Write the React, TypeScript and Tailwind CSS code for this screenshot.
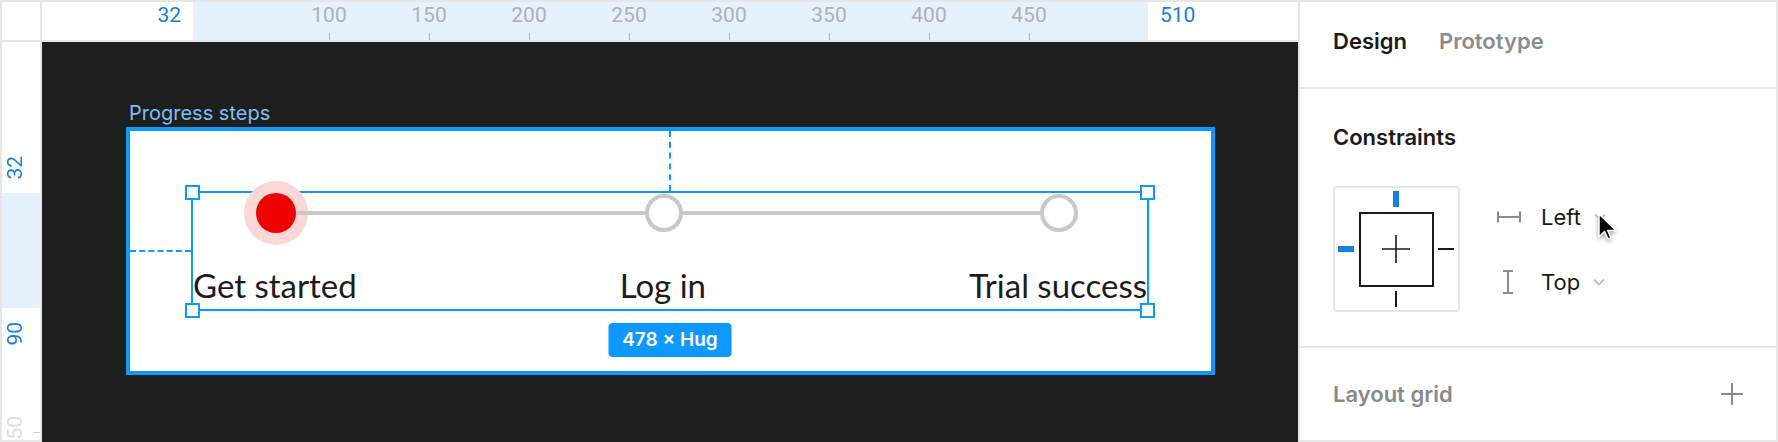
import type { ReactNode } from "react";

const TOP_TICKS = [100, 150, 200, 250, 300, 350, 400, 450];

function TopRuler() {
  return (
    <div className="flex h-[40px] shrink-0 border-b-2 border-[#e6e6e6] font-[Roboto,sans-serif] text-[21px] leading-[26px]">
      <div className="w-[40px] shrink-0 border-r-2 border-[#e6e6e6]" />
      <div className="flex flex-1">
        <div className="flex w-[151px] justify-end pr-[12px] text-[#1a7fe0]">32</div>
        <div className="flex w-[955px] bg-[#e5f2fd] pl-[86px]">
          {TOP_TICKS.map((n) => (
            <div key={n} className="flex w-[100px] flex-col items-center">
              <span className="text-[#b0b0b0]">{n}</span>
              <span className="mt-auto h-[7px] w-px bg-[#b0b0b0]" />
            </div>
          ))}
        </div>
        <div className="pl-[12px] text-[#1a7fe0]">510</div>
      </div>
    </div>
  );
}

function LeftRuler() {
  return (
    <div className="flex w-[40px] shrink-0 flex-col border-r-2 border-[#e6e6e6] font-[Roboto,sans-serif] text-[21px] leading-[24px]">
      <div className="flex h-[151px] flex-col items-start justify-end pb-[13px] pl-[1px]">
        <span className="rotate-180 text-[#1a7fe0] [writing-mode:vertical-rl]">32</span>
      </div>
      <div className="h-[115px] bg-[#e5f2fd]" />
      <div className="flex flex-1 flex-col items-start pl-[1px] pt-[14px]">
        <span className="rotate-180 text-[#1a7fe0] [writing-mode:vertical-rl]">90</span>
        <div className="mt-[70px] flex w-full items-start">
          <span className="rotate-180 text-[#dcdcdc] [writing-mode:vertical-rl]">150</span>
          <span className="ml-auto mt-[16px] h-px w-[7px] bg-[#cfcfcf]" />
        </div>
      </div>
    </div>
  );
}

function Handle({ className }: { readonly className: string }) {
  return <span className={`absolute h-[15px] w-[15px] border-2 border-[#0d99ff] bg-[#f9f9f9] ${className}`} />;
}

function Stepper() {
  return (
    <div className="relative ml-[61px] mt-[60px] h-[120px] w-[958px] border-2 border-[#0d99ff]">
      <div className="flex h-[40px] items-center pl-[51px]">
        <div className="flex h-[64px] w-[64px] shrink-0 items-center justify-center rounded-full bg-[#fbd7d7]">
          <div className="h-[40px] w-[40px] rounded-full bg-[#ee0000]" />
        </div>
        <div className="-ml-[12px] h-[4px] w-[349px] bg-[#c8c8c8]" />
        <div className="h-[38px] w-[38px] shrink-0 rounded-full border-4 border-[#c8c8c8] bg-white" />
        <div className="h-[4px] w-[357px] bg-[#c8c8c8]" />
        <div className="h-[38px] w-[38px] shrink-0 rounded-full border-4 border-[#c8c8c8] bg-white" />
      </div>
      <div className="mt-[32px] flex justify-between font-[Lato,sans-serif] text-[33px] leading-[40px] text-[#1c1c1c]">
        <span>Get started</span>
        <span>Log in</span>
        <span>Trial success</span>
      </div>

      <Handle className="-left-[8px] -top-[8px]" />
      <Handle className="left-[947px] -top-[8px]" />
      <Handle className="-left-[8px] top-[110px]" />
      <Handle className="left-[947px] top-[110px]" />

      <div className="absolute left-1/2 top-[130px] flex h-[34px] w-[123px] -translate-x-1/2 items-center justify-center rounded-[4px] bg-[#0d99ff] font-[Inter,sans-serif] text-[19px] font-semibold text-white">
        478 × Hug
      </div>
    </div>
  );
}

function Canvas() {
  return (
    <div className="flex-1 overflow-hidden bg-[#1e1e1e] pl-[84px] pt-[59px]">
      <div className="mb-[2px] ml-[3px] font-[Inter,sans-serif] text-[20px] leading-[24px] text-[#7dc0f4]">
        Progress steps
      </div>
      <div className="relative h-[248px] w-[1089px] border-4 border-[#0d99ff] bg-white">
        <span className="absolute left-[539px] top-0 h-[60px] border-l-2 border-dashed border-[#0d99ff]" />
        <span className="absolute left-0 top-[119px] w-[61px] border-t-2 border-dashed border-[#0d99ff]" />
        <Stepper />
      </div>
    </div>
  );
}

function Chevron() {
  return (
    <svg width="12" height="8" viewBox="0 0 12 8" className="ml-[13px]">
      <path d="M1 1.5 L6 6.5 L11 1.5" fill="none" stroke="#b3b3b3" strokeWidth="1.5" />
    </svg>
  );
}

function ConstraintRow({ icon, label }: { readonly icon: ReactNode; readonly label: string }) {
  return (
    <div className="flex h-[40px] items-center">
      <div className="flex w-[44px] items-center">{icon}</div>
      <span className="text-[22px] leading-[28px] text-[#1a1a1a]">{label}</span>
      <Chevron />
    </div>
  );
}

function ConstraintWidget() {
  return (
    <div className="h-[126px] w-[127px] shrink-0 rounded-[4px] border-2 border-[#e6e6e6]">
      <svg width="123" height="122" viewBox="0 0 123 122">
        <rect x="25" y="25" width="73" height="73" fill="none" stroke="#1a1a1a" strokeWidth="2" />
        <path d="M47 61 H75 M61 47 V75" stroke="#1a1a1a" strokeWidth="1.6" />
        <rect x="58" y="3" width="6" height="16" fill="#1480e3" />
        <rect x="3" y="58" width="16" height="6" fill="#1480e3" />
        <path d="M103 61 H119" stroke="#1a1a1a" strokeWidth="2" />
        <path d="M61 103 V119" stroke="#1a1a1a" strokeWidth="2" />
      </svg>
    </div>
  );
}

function Panel() {
  return (
    <div className="flex flex-1 flex-col border-l-2 border-[#e6e6e6] font-[Inter,sans-serif]">
      <div className="flex h-[87px] shrink-0 gap-[32px] border-b-2 border-[#e6e6e6] pl-[33px] pt-[25px] text-[22px] font-semibold leading-[28px]">
        <span className="text-[#1a1a1a]">Design</span>
        <span className="text-[#8c8c8c]">Prototype</span>
      </div>
      <div className="h-[259px] shrink-0 border-b-2 border-[#e6e6e6] pl-[33px] pt-[34px]">
        <div className="text-[22px] font-semibold leading-[28px] text-[#1a1a1a]">Constraints</div>
        <div className="mt-[35px] flex">
          <ConstraintWidget />
          <div className="ml-[37px] flex flex-col gap-[25px] pt-[11px]">
            <ConstraintRow
              label="Left"
              icon={
                <svg width="24" height="14" viewBox="0 0 24 14">
                  <path d="M1 7 H23 M1 1.5 V12.5 M23 1.5 V12.5" fill="none" stroke="#8c8c8c" strokeWidth="2" />
                </svg>
              }
            />
            <ConstraintRow
              label="Top"
              icon={
                <svg width="24" height="24" viewBox="0 0 24 24">
                  <path d="M11 1 V23 M6 1 H16 M6 23 H16" fill="none" stroke="#8c8c8c" strokeWidth="2" />
                </svg>
              }
            />
          </div>
        </div>
      </div>
      <div className="flex flex-1 items-center justify-between px-[33px]">
        <span className="text-[22px] font-semibold leading-[28px] text-[#8a8a8a]">Layout grid</span>
        <svg width="22" height="22" viewBox="0 0 22 22">
          <path d="M11 0 V22 M0 11 H22" stroke="#8a8a8a" strokeWidth="2" />
        </svg>
      </div>
    </div>
  );
}

export default function App() {
  return (
    <div className="relative flex h-[442px] w-[1778px] border-2 border-[#e6e6e6] bg-white">
      <div className="flex w-[1296px] shrink-0 flex-col">
        <TopRuler />
        <div className="flex flex-1">
          <LeftRuler />
          <Canvas />
        </div>
      </div>
      <Panel />

      <svg
        width="26"
        height="32"
        viewBox="0 0 26 32"
        className="absolute left-[1595px] top-[210px] drop-shadow-[0_2px_2px_rgba(0,0,0,0.35)]"
      >
        <path
          d="M2 2 V25 L7.5 19.5 L11 27 L14 25.7 L10.7 18.5 H19 Z"
          fill="#000"
          stroke="#fff"
          strokeWidth="1.5"
          strokeLinejoin="round"
        />
      </svg>
    </div>
  );
}
